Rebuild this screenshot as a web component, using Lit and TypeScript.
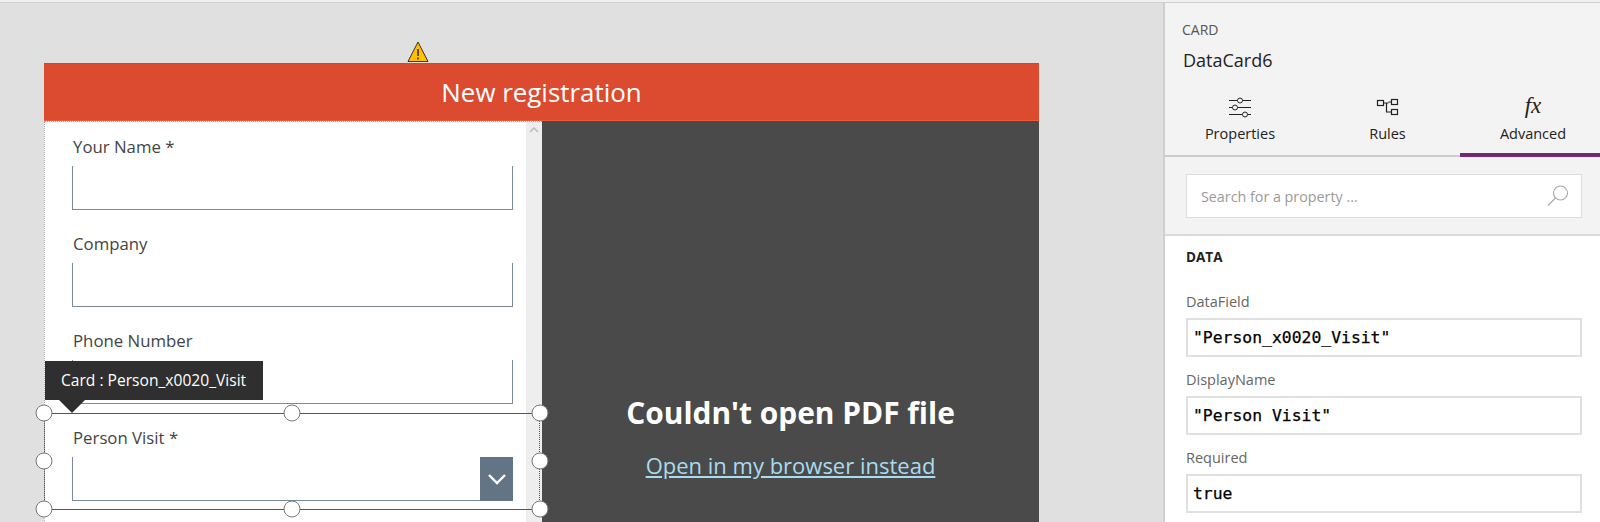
import { LitElement, html, css } from "lit";
import { customElement } from "lit/decorators.js";

@customElement("app-root")
export class AppRoot extends LitElement {
  static styles = css`
    :host { display: block; width: 1600px; height: 522px; overflow: hidden; font-family: "Open Sans", "Noto Sans", sans-serif; background: #e0e0e0; position: relative; }
    * { box-sizing: border-box; }
    .top { height: 3px; background: #f0f0f0; border-bottom: 1px solid #cfcfcf; }
    .main { display: flex; height: 519px; }
    .canvas { width: 1163px; flex: none; padding: 60px 0 0 44px; background: #e0e0e0; }
    .screen { width: 995px; position: relative; }
    .warn { position: absolute; left: 363px; top: -22px; width: 22px; height: 21px; display: block; }
    .hdr { height: 58px; background: #dc4b2f; color: #fff; font-size: 25.9px; display: flex; align-items: center; justify-content: center; border-top: 1px solid #d24528; border-bottom: 1px solid #f0583a; }
    .body { display: flex; height: 420px; }
    .form { width: 498px; flex: none; background: #fff; border-left: 1px dotted #aaa; border-top: 1px dotted #aaa; display: flex; position: relative; }
    .fields { width: 481px; flex: none; padding: 14px 0 0 28px; }
    .scroll { flex: 1; background: #eeeeee; display: flex; justify-content: center; padding-top: 5px; }
    .card { height: 97px; }
    .card:first-child .lbl { }
    .lbl { font-size: 16.8px; line-height: 22px; color: #444; height: 30px; }
    .inp { width: 441px; height: 44px; border: 1px solid #7c8b9b; border-top: none; position: relative; margin-left: -1px; }
    .chev { position: absolute; right: -1px; top: 0; width: 33px; height: 44px; background: #637585; display: flex; align-items: center; justify-content: center; }
    .pdf { flex: 1; background: #4a4a4a; color: #fff; display: flex; flex-direction: column; align-items: center; padding-top: 272px; }
    .pdf h2 { margin: 0; font-size: 29.9px; line-height: 40px; font-weight: 700; }
    .pdf a { margin-top: 17px; color: #a8dcee; font-size: 22px; line-height: 30px; text-decoration: underline; }
    .tip { position: absolute; left: 1px; top: 298px; width: 218px; height: 39px; background: #2f2f2f; color: #fff; font-size: 15.6px; line-height: 39px; padding-left: 16px; z-index: 2; }
    .tip::after { content: ""; position: absolute; left: 14px; top: 39px; border: 13px solid transparent; border-top-color: #2f2f2f; border-bottom: 0; }
    .sel { position: absolute; left: 0; top: 350px; width: 496px; height: 97px; border: 1px solid #555; border-left-style: dotted; border-right-style: dotted; z-index: 1; }
    .h { position: absolute; width: 17px; height: 17px; border-radius: 50%; background: #fff; border: 1px solid #777; transform: translate(-50%, -50%); }
    .panel { flex: 1; border-left: 2px solid #cfcfcf; background: #fff; }
    .phead { height: 233px; background: #f3f3f3; border-bottom: 2px solid #d9d9d9; position: relative; }
    .kind { padding: 17px 0 0 17px; font-size: 14px; line-height: 20px; color: #555; }
    .name { padding: 8px 0 0 18px; font-size: 18px; line-height: 24px; color: #222; }
    .tabs { display: grid; grid-template-columns: 150px 145px 1fr; margin-top: 22px; height: 63px; border-bottom: 2px solid #cbcbcb; }
    .tab { display: flex; flex-direction: column; align-items: center; font-size: 14.5px; color: #222; position: relative; }
    .tab svg { height: 24px; width: 28px; display: block; }
    .tab span { line-height: 22px; margin-top: 5px; }
    .tab.on { padding-left: 6px; }
    .tab.on::after { content: ""; position: absolute; left: 0; right: 0; bottom: -2px; height: 4px; background: #742774; }
    .fx { height: 24px; font-family: "Liberation Serif", serif; font-style: italic; font-size: 23px; line-height: 24px; }
    .search { margin: 17px 18px 0 21px; height: 44px; background: #fff; border: 1px solid #dcdcdc; display: flex; align-items: center; justify-content: space-between; padding: 0 11px 0 14px; font-size: 14.3px; color: #9a9a9a; }
    .pbody { padding: 12px 18px 0 21px; }
    .sec { font-size: 13.5px; line-height: 18px; font-weight: 700; color: #222; margin-bottom: 26px; }
    .flabel { font-size: 14.5px; line-height: 20px; color: #666; margin-bottom: 6px; }
    .fval { height: 39px; border: 2px solid #e0e0e0; background: #fff; font-family: "DejaVu Sans Mono", monospace; font-size: 16.4px; line-height: 35px; padding-left: 5px; color: #000; -webkit-text-stroke: 0.25px #000; margin-bottom: 13px; }
  `;

  private handles = [
    [-1, -1], [247, -1], [495, -1],
    [-1, 47], [495, 47],
    [-1, 95], [247, 95], [495, 95],
  ];

  render() {
    const fields = ["Your Name *", "Company", "Phone Number", "Person Visit *"];
    return html`
      <div class="top"></div>
      <div class="main">
        <div class="canvas">
          <div class="screen">
            <svg class="warn" viewBox="0 0 22 21"><path d="M11 1 L21 20.5 H1 Z" fill="#ffc000" stroke="#333" stroke-width="1"/><path d="M11 8v7M11 16.5v2" stroke="#222" stroke-width="1.4"/></svg>
            <div class="hdr">New registration</div>
            <div class="body">
              <div class="form">
                <div class="fields">
                  ${fields.map((f, i) => html`
                    <div class="card">
                      <div class="lbl">${f}</div>
                      <div class="inp">
                        ${i === 3 ? html`<div class="chev"><svg width="20" height="12" viewBox="0 0 20 12"><path d="M2 2 L10 10 L18 2" fill="none" stroke="#fff" stroke-width="2.4"/></svg></div>` : ""}
                      </div>
                    </div>`)}
                </div>
                <div class="scroll"><svg width="10" height="6" viewBox="0 0 10 6"><path d="M1 5 L5 1 L9 5" fill="none" stroke="#bbb" stroke-width="1.5"/></svg></div>
              </div>
              <div class="pdf">
                <h2>Couldn't open PDF file</h2>
                <a>Open in my browser instead</a>
              </div>
            </div>
            <div class="tip">Card : Person_x0020_Visit</div>
            <div class="sel">
              ${this.handles.map(([x, y]) => html`<div class="h" style="left:${x}px;top:${y}px"></div>`)}
            </div>
          </div>
        </div>
        <div class="panel">
          <div class="phead">
            <div class="kind">CARD</div>
            <div class="name">DataCard6</div>
            <div class="tabs">
              <div class="tab">
                <svg viewBox="0 0 28 24" fill="none" stroke="#222" stroke-width="1"><path d="M3 6.5h22M3 13.5h22M3 20.5h22"/><circle cx="14" cy="6.5" r="2.500" fill="#f3f3f3"/><circle cx="9" cy="13.5" r="2.500" fill="#f3f3f3"/><circle cx="19" cy="20.5" r="2.500" fill="#f3f3f3"/></svg>
                <span>Properties</span>
              </div>
              <div class="tab">
                <svg viewBox="0 0 28 24" fill="none" stroke="#222" stroke-width="1.2"><rect x="3.500" y="6.500" width="6" height="5"/><rect x="17.500" y="5.500" width="6" height="5"/><rect x="17.500" y="15.500" width="6" height="5"/><path d="M9.500 9h5M12.500 9v9h5M14.500 8h3"/></svg>
                <span>Rules</span>
              </div>
              <div class="tab on">
                <div class="fx">fx</div>
                <span>Advanced</span>
              </div>
            </div>
            <div class="search">
              <span>Search for a property ...</span>
              <svg width="24" height="24" viewBox="0 0 24 24" fill="none" stroke="#a8a8a8" stroke-width="1.1"><circle cx="14.500" cy="9" r="7"/><path d="M9.500 14 L2 21.500"/></svg>
            </div>
          </div>
          <div class="pbody">
            <div class="sec">DATA</div>
            <div class="flabel">DataField</div>
            <div class="fval">"Person_x0020_Visit"</div>
            <div class="flabel">DisplayName</div>
            <div class="fval">"Person Visit"</div>
            <div class="flabel">Required</div>
            <div class="fval">true</div>
          </div>
        </div>
      </div>
    `;
  }
}
